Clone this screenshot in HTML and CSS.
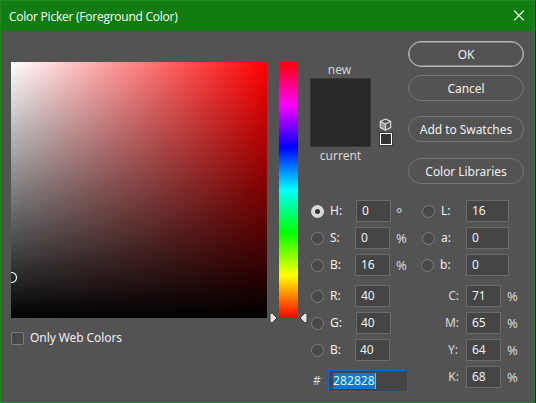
FILE: index.html
```html
<!DOCTYPE html>
<html lang="en">
<head>
<meta charset="utf-8">
<title>Color Picker (Foreground Color)</title>
<link rel="stylesheet" href="styles.css">
</head>
<body>
<div class="window">
  <header class="titlebar">
    <span class="title">Color Picker (Foreground Color)</span>
    <svg class="close" width="12" height="12" viewBox="0 0 12 12"><path d="M1.2 .7 10.8 10.3M10.8 .7 1.2 10.3"/></svg>
  </header>
  <main class="content">
    <section class="spectrum">
      <div class="field"><svg class="marker" width="8" height="12" viewBox="0 0 8 12"><circle cx="0.5" cy="5.5" r="5"/></svg></div>
      <label class="web-only"><span class="checkbox"></span><span class="web-text">Only Web Colors</span></label>
    </section>
    <div class="hue">
      <svg class="arrow arrow-left" width="9" height="10" viewBox="0 0 9 10"><path d="M1 1.5Q1 .5 2.4.5H3.5L8 5 3.5 9.5H2.4Q1 9.5 1 8.5Z"/></svg>
      <svg class="arrow arrow-right" width="9" height="10" viewBox="0 0 9 10"><path d="M8 1.5Q8 .5 6.6.5H5.5L1 5 5.5 9.5H6.6Q8 9.5 8 8.5Z"/></svg>
    </div>
    <section class="panel">
      <div class="top">
        <div class="preview">
          <span class="caption new">new</span>
          <div class="swatch"></div>
          <span class="caption current">current</span>
        </div>
        <div class="warning">
          <svg width="13" height="13" viewBox="0 0 13 13"><path class="cube-left" d="M1 3.5 6.5 6V12.2L1 9.5Z"/><path class="cube-lines" d="M6.5 1 11.7 3.4V9.6L6.5 12.2 1.3 9.6V3.4ZM1.3 3.4 6.5 6 11.7 3.4M6.5 6V12"/></svg>
          <div class="web-swatch"></div>
        </div>
        <div class="buttons">
          <button class="button primary">OK</button>
          <button class="button cancel">Cancel</button>
          <button class="button add">Add to Swatches</button>
          <button class="button libraries">Color Libraries</button>
        </div>
      </div>
      <div class="values">
        <div class="column">
          <div class="row"><span class="radio checked"></span><span class="label">H:</span><span class="box shifted">0</span><span class="unit degree">°</span></div>
          <div class="row"><span class="radio"></span><span class="label">S:</span><span class="box">0</span><span class="unit">%</span></div>
          <div class="row"><span class="radio"></span><span class="label">B:</span><span class="box">16</span><span class="unit">%</span></div>
          <div class="row group"><span class="radio"></span><span class="label">R:</span><span class="box">40</span></div>
          <div class="row"><span class="radio"></span><span class="label">G:</span><span class="box shifted tight">40</span></div>
          <div class="row"><span class="radio"></span><span class="label">B:</span><span class="box tight">40</span></div>
          <div class="row hex"><span class="hash">#</span><span class="hex-box"><span class="selection">282828</span></span></div>
        </div>
        <div class="column">
          <div class="row"><span class="radio"></span><span class="label">L:</span><span class="box wide">16</span></div>
          <div class="row"><span class="radio"></span><span class="label">a:</span><span class="box wide">0</span></div>
          <div class="row pulled"><span class="radio"></span><span class="label">b:</span><span class="box wide">0</span></div>
          <div class="row group"><span class="ink">C:</span><span class="box">71</span><span class="unit">%</span></div>
          <div class="row"><span class="ink">M:</span><span class="box">65</span><span class="unit">%</span></div>
          <div class="row"><span class="ink ink-y">Y:</span><span class="box">64</span><span class="unit">%</span></div>
          <div class="row"><span class="ink">K:</span><span class="box">68</span><span class="unit">%</span></div>
        </div>
      </div>
    </section>
  </main>
</div>
</body>
</html>
```

FILE: styles.css
```css
* { box-sizing: border-box; }

body {
  margin: 0;
  width: 536px;
  height: 403px;
  overflow: hidden;
  background: #111b14;
  font: 12px/16px "Noto Sans", "Open Sans", sans-serif;
  color: #f0f0f0;
}

.window {
  width: 535px;
  height: 403px;
  border: 1px solid #218721;
  background: #535353;
}

.titlebar {
  height: 30px;
  padding: 0 9px 0 8px;
  display: flex;
  align-items: center;
  justify-content: space-between;
  background: #117c11;
}

.title { font: 12px/16px "Open Sans", sans-serif; letter-spacing: -0.24px; color: #fff; padding-top: 1px; }
.close { fill: none; stroke: #fff; stroke-width: 1.2; }

.content { display: flex; padding-left: 10px; }

.spectrum { width: 256px; padding-top: 31px; }

.field {
  position: relative;
  height: 256px;
  overflow: hidden;
  background:
    linear-gradient(to bottom, transparent, #000),
    linear-gradient(to right, #fff, #f00);
}

.marker { position: absolute; left: 0; top: 210px; fill: none; stroke: #fff; stroke-width: 1.1; }

.web-only { display: flex; align-items: center; gap: 6px; height: 16px; margin-top: 12px; }
.web-text { letter-spacing: -0.08px; }
.checkbox { width: 13px; height: 13px; border: 1px solid #7b7b7b; border-radius: 2px; background: #484848; }

.hue {
  position: relative;
  width: 19px;
  height: 256px;
  margin: 31px 12px 0;
  background: linear-gradient(to bottom, #f00, #f0f, #00f, #0ff, #0f0, #ff0, #f00);
}

.arrow { position: absolute; bottom: -5px; fill: #e3e3e3; stroke: #333; stroke-width: .9; }
.arrow-left { left: -10px; }
.arrow-right { right: -10px; }

.panel { width: 216px; }
.top { display: flex; height: 169px; }

.preview { width: 61px; display: flex; flex-direction: column; padding-top: 31px; align-items: center; }
.caption { color: #d6d6d6; height: 16px; }
.new { margin-right: 2px; }
.current { margin-top: 1px; }
.swatch { width: 61px; height: 69px; border: 1px solid #383838; background: #282828; }

.warning { width: 14px; margin: 87px 0 0 8px; }
.warning svg { display: block; }
.cube-left { fill: #929292; }
.cube-lines { fill: none; stroke: #dedede; stroke-width: 1.1; }
.web-swatch { width: 14px; height: 14px; margin-top: 1px; border: 1px solid #383838; background: #333; box-shadow: inset 0 0 0 1px #fff; }

.buttons { margin: 10px 0 0 15px; width: 116px; flex: none; }
.button {
  display: flex;
  align-items: center;
  justify-content: center;
  width: 116px;
  height: 26px;
  padding: 2px 0 0;
  border: 1px solid #737373;
  border-radius: 13px;
  background: none;
  color: #f0f0f0;
  font: inherit;
  letter-spacing: -0.05px;
  white-space: nowrap;
}
.primary { border-color: #b8b8b8; box-shadow: inset 0 0 0 .5px #b8b8b8; }
.cancel { margin-top: 8px; }
.add { margin-top: 15px; }
.libraries { margin-top: 16px; }

.values { display: flex; }
.column { flex: none; width: 111px; }
.row { display: flex; align-items: center; height: 22px; margin-bottom: 5px; }
.group { margin-top: 9px; }
.pulled { margin-left: -1px; }
.pulled .box { margin-left: 1px; }

.radio { flex: none; width: 13px; height: 13px; margin-left: 1px; border: 1px solid #7d7d7d; border-radius: 50%; background: #484848; }
.checked { border: 4px solid #d8d8d8; background: #333; }
.label { width: 25px; margin-left: 6px; flex: none; }

.box {
  flex: none;
  width: 35px;
  height: 22px;
  padding-left: 5px;
  border: 1px solid #6a6a6a;
  background: #444;
  line-height: 20px;
}
.shifted { margin-left: 1px; }
.tight { padding-left: 4px; }
.wide { width: 43px; }
.unit { margin-left: 6px; color: #dadada; font-size: 13px; }
.degree { margin-left: 5px; font-size: 15px; padding-top: 3px; }

.hex { margin-top: 9px; }
.hash { width: 15px; padding-left: 3px; margin-right: 3px; color: #dadada; }
.hex-box { flex: none; width: 80px; height: 22px; padding: 2px 4px; border: 1px solid #1463c8; background: #444; }
.selection { display: block; width: 43px; height: 16px; letter-spacing: 0.1px; background: #0078d7; border-right: 1px solid #ff9a4a; }

.ink { width: 45px; padding-right: 7px; text-align: right; flex: none; color: #dadada; }
.ink-y { padding-right: 8px; }
```
